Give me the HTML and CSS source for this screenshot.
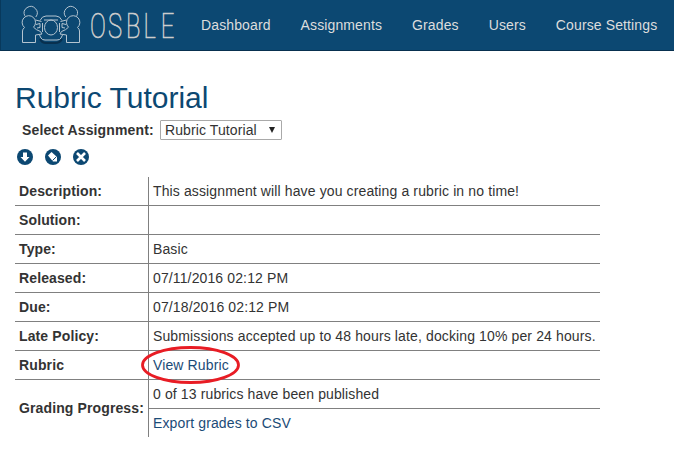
FILE: index.html
```html
<!DOCTYPE html>
<html lang="en">
<head>
<meta charset="utf-8">
<title>OSBLE - Rubric Tutorial</title>
<link rel="stylesheet" href="styles.css">
</head>
<body>
<header class="navbar">
  <a class="brand" href="#" aria-label="OSBLE">
    <svg width="156" height="44" viewBox="0 0 156 44">
      <path class="shadow" d="M19 36q2 4 6 4h9q5 0 7-4" />
      <g class="people">
        <path d="M3.800 12.800A6.500 6.500 0 1 1 14.800 14" />
        <path d="M55.800 12.800A6.500 6.500 0 1 0 44.800 14" />
        <path d="M3.500 24.500A6.700 6.700 0 1 1 12.500 24.200Q15 27 19.500 28.500L21 31L14.500 32V39.500H1.500V28Q1.500 26 3.500 24.500Z" />
        <path d="M56.500 24.500A6.700 6.700 0 1 0 47.500 24.200Q45 27 40.500 28.500L39 31L45.500 32V39.500H58.500V28Q58.500 26 56.500 24.500Z" />
        <path d="M14.500 17l6 1.500M15 21.500l4-1v4l-3 .5M45.500 17l-6 1.500M45 21.500l-4-1v4l3 .5" />
        <path d="M19 17.500q2-4.500 6-4.500h10q4 0 6 4.500M18.500 32l1.500 3q1 2 4 2h12q3 0 4-2l1.500-3" />
        <path d="M21.500 20v9M38.500 20v9M23 17h14" />
        <ellipse cx="30" cy="24.500" rx="6.500" ry="7.500" />
      </g>
      <text class="wordmark" transform="translate(69 34.500) scale(.68 1)" x="0 26.500 53 78.500 104" y="0">OSBLE</text>
    </svg>
  </a>
  <nav class="links">
    <a href="#">Dashboard</a>
    <a href="#">Assignments</a>
    <a href="#">Grades</a>
    <a href="#">Users</a>
    <a href="#">Course Settings</a>
  </nav>
</header>
<main class="content">
  <h1>Rubric Tutorial</h1>
  <div class="picker">
    <span class="picker-label">Select Assignment:</span>
    <button class="select" type="button"><span>Rubric Tutorial</span><svg width="8" height="7" viewBox="0 0 8 7"><path d="M1 0h6L4 6z" fill="#222"/></svg></button>
  </div>
  <div class="actions">
    <svg width="16" height="16" viewBox="0 0 16 16"><circle cx="8" cy="8" r="8"/><path class="w" d="M6 3.500h4v4.500h2.500L8 12.800 3.500 8h2.500z"/></svg>
    <svg width="16" height="16" viewBox="0 0 16 16"><circle cx="8" cy="8" r="8"/><path class="w" d="M3 6.500L6.500 3l5.500 5v4.500H8z"/><path class="d" d="M7.500 11.500l3.800-3.700"/></svg>
    <svg width="16" height="16" viewBox="0 0 16 16"><circle cx="8" cy="8" r="8"/><path class="x" d="M4 4l8 8M12 4l-8 8"/></svg>
  </div>
  <table class="details">
    <tr><th>Description:</th><td>This assignment will have you creating a rubric in no time!</td></tr>
    <tr><th>Solution:</th><td></td></tr>
    <tr><th>Type:</th><td>Basic</td></tr>
    <tr><th>Released:</th><td>07/11/2016 02:12 PM</td></tr>
    <tr><th>Due:</th><td>07/18/2016 02:12 PM</td></tr>
    <tr><th>Late Policy:</th><td>Submissions accepted up to 48 hours late, docking 10% per 24 hours.</td></tr>
    <tr><th>Rubric</th><td><span class="marked"><a href="#">View Rubric</a><svg class="ring" width="100" height="40" viewBox="0 0 100 40"><ellipse cx="50.500" cy="20" rx="48" ry="17.500"/></svg></span></td></tr>
    <tr><th rowspan="2">Grading Progress:</th><td>0 of 13 rubrics have been published</td></tr>
    <tr><td><a href="#">Export grades to CSV</a></td></tr>
  </table>
</main>
</body>
</html>
```

FILE: styles.css
```css
* { box-sizing: border-box; }
body {
  margin: 0;
  background: #fff;
  color: #333;
  font: 14px/20px "Liberation Sans", Arial, sans-serif;
}
a { color: #1b4b77; text-decoration: none; }
.navbar {
  display: flex;
  height: 51px;
  background: #0c4872;
  border-bottom: 1px solid #08304f;
  border-left: 1px solid #08395c;
}
.brand { width: 185px; padding: 3px 0 0 20px; }
.brand svg { display: block; }
.people { fill: none; stroke: #b4c4d0; stroke-width: 1; }
.shadow { fill: none; stroke: #08304f; stroke-width: 2; }
.wordmark { font: 100 35px Roboto, sans-serif; fill: #ccc; stroke: #ccc; stroke-width: .7px; }
.links { display: flex; }
.links a { padding: 15px; color: #ddd; letter-spacing: .12px; white-space: nowrap; }
.content { padding: 30px 15px 0; }
h1 {
  margin: 0;
  color: #0c4872;
  font-size: 30px;
  font-weight: 400;
  line-height: 33px;
}
.picker { display: flex; align-items: center; height: 20px; margin-top: 6px; padding-left: 7px; }
.picker-label { width: 138px; font-weight: 700; letter-spacing: .13px; white-space: nowrap; }
.select {
  display: flex;
  align-items: center;
  justify-content: space-between;
  width: 122px;
  height: 20px;
  padding: 0 5px 0 4px;
  border: 1px solid #a9a9a9;
  border-radius: 1px;
  background: #fff;
  color: #333;
  font: inherit;
  letter-spacing: .1px;
  white-space: nowrap;
}
.actions { display: flex; gap: 12px; margin: 9px 0 0 2px; height: 16px; }
.actions circle { fill: #0c4872; }
.w { fill: #fff; }
.d { stroke: #0c4872; stroke-width: 1; }
.x { stroke: #fff; stroke-width: 2.6; }
.details { margin-top: 12px; width: 585px; border-collapse: separate; border-spacing: 0; table-layout: fixed; }
.details th, .details td { height: 29px; padding: 4px; text-align: left; white-space: nowrap; border-bottom: 1px solid #808080; }
.details td { letter-spacing: .125px; }
.details th { width: 134px; letter-spacing: .12px; border-right: 1px solid #808080; }
.details tr:last-child td, .details th[rowspan] { border-bottom: 0; }
.details tr:last-child td { height: 28px; }
.details th[rowspan] { padding-bottom: 5px; }
.marked { position: relative; }
.ring { position: absolute; left: -13px; top: -12px; fill: none; stroke: #e81c24; stroke-width: 2.8; }
```
